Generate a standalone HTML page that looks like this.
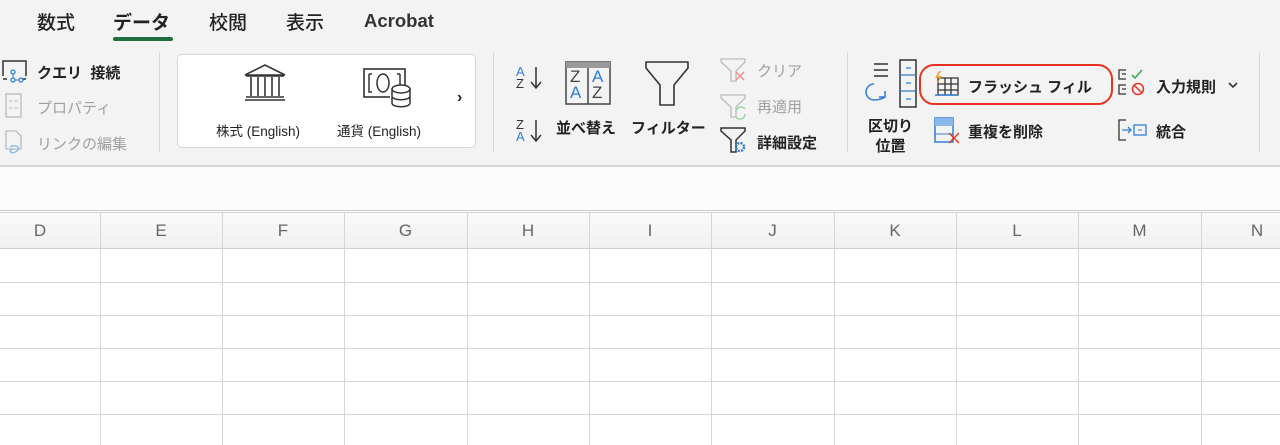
<!DOCTYPE html>
<html><head><meta charset="utf-8"><style>
*{margin:0;padding:0;box-sizing:border-box}
body{width:1280px;height:445px;overflow:hidden;background:#fff;font-family:"Liberation Sans","Noto Sans CJK JP",sans-serif;color:#222;position:relative}
.ab{position:absolute;white-space:nowrap}
.tab{font-size:19px;top:8px;font-weight:500}
.t{font-size:15px}
.g{color:#a0a0a0}
svg{position:absolute;overflow:visible}
.col{position:absolute;top:213px;height:36px;font-size:17px;color:#666;text-align:center;line-height:36px}
</style></head><body>
<div class="ab" style="left:0;top:0;width:1280px;height:166px;background:#f3f3f3"></div>
<div class="ab" style="left:0;top:165px;width:1280px;height:2px;background:#d6d6d6"></div>
<div class="ab tab" style="left:37px">数式</div>
<div class="ab tab" style="left:113px;font-weight:bold">データ</div>
<div class="ab" style="left:113px;top:37px;width:60px;height:4px;border-radius:2px;background:#1e6e3f"></div>
<div class="ab tab" style="left:209px">校閲</div>
<div class="ab tab" style="left:286px">表示</div>
<div class="ab tab" style="left:364px;top:10px;font-weight:bold;font-size:18.5px;color:#333">Acrobat</div>

<!-- group 1 -->
<svg style="left:2px;top:60px" width="26" height="22"><path d="M1 16V1h23v15" fill="none" stroke="#333" stroke-width="1.5"/><path d="M1 19h4M20 19h4" stroke="#333" stroke-width="1.5"/><circle cx="11" cy="12" r="2" fill="none" stroke="#2f7ed8" stroke-width="1.3"/><circle cx="11" cy="20" r="2" fill="none" stroke="#2f7ed8" stroke-width="1.3"/><circle cx="19" cy="20" r="2" fill="none" stroke="#2f7ed8" stroke-width="1.3"/><path d="M11 14v4M13 20h4" stroke="#2f7ed8"/></svg>
<div class="ab t" style="left:37px;top:62px;font-weight:bold">クエリ&nbsp; 接続</div>
<svg style="left:5px;top:93px" width="18" height="25"><rect x="1" y="1" width="15" height="23" fill="none" stroke="#bbb" stroke-width="1.3"/><path d="M4 8h3M9 8h4M4 15h3M9 15h4" stroke="#bbb"/></svg>
<div class="ab t g" style="left:37px;top:97px">プロパティ</div>
<svg style="left:5px;top:130px" width="20" height="26"><path d="M1 1h10l5 5v13H1z" fill="none" stroke="#bbb" stroke-width="1.3"/><path d="M5 17c4-3 12 0 7 4s-10 0-4-2" fill="none" stroke="#8ab4e0" stroke-width="1.3"/></svg>
<div class="ab t g" style="left:37px;top:133px">リンクの編集</div>
<div class="ab" style="left:159px;top:52px;width:1px;height:100px;background:#d8d8d8"></div>

<!-- data types box -->
<div class="ab" style="left:177px;top:54px;width:299px;height:94px;background:#fff;border:1px solid #d6d6d6;border-radius:5px"></div>
<svg style="left:243px;top:64px" width="44" height="38"><path d="M2 11L22 1l20 10z" fill="none" stroke="#333" stroke-width="1.6"/><path d="M3 12h38M2 36h40M3 33h38M8 13v19M15 13v19M22 13v19M29 13v19M36 13v19" stroke="#333" stroke-width="1.6"/></svg>
<div class="ab" style="left:216px;top:120px;font-size:13.5px">株式 (English)</div>
<svg style="left:363px;top:68px" width="50" height="42"><rect x="1" y="1" width="41" height="28" fill="none" stroke="#333" stroke-width="1.6"/><path d="M6 6h3M6 6v18h3M37 6h-3M37 6v18" stroke="#333" stroke-width="1.5" fill="none"/><ellipse cx="20" cy="15" rx="6" ry="9" fill="none" stroke="#333" stroke-width="1.5"/><rect x="27" y="17" width="21" height="24" rx="10" fill="#fff"/><ellipse cx="38" cy="21" rx="9" ry="4" fill="none" stroke="#333" stroke-width="1.5"/><path d="M29 21v14c0 5 18 5 18 0V21M29 28c0 5 18 5 18 0" fill="none" stroke="#333" stroke-width="1.5"/></svg>
<div class="ab" style="left:337px;top:120px;font-size:13.5px">通貨 (English)</div>
<div class="ab" style="left:457px;top:89px;font-size:16px;font-weight:bold">›</div>
<div class="ab" style="left:493px;top:52px;width:1px;height:100px;background:#d8d8d8"></div>

<!-- sort -->
<div class="ab" style="left:516px;top:66px;font-size:13px;line-height:12px;color:#2f7ed8">A<br><span style="color:#333">Z</span></div>
<svg style="left:529px;top:66px" width="14" height="24"><path d="M7 1v21M2 16l5 6 5-6" fill="none" stroke="#333" stroke-width="1.5"/></svg>
<div class="ab" style="left:516px;top:119px;font-size:13px;line-height:12px;color:#333">Z<br><span style="color:#2f7ed8">A</span></div>
<svg style="left:529px;top:119px" width="14" height="24"><path d="M7 1v21M2 16l5 6 5-6" fill="none" stroke="#333" stroke-width="1.5"/></svg>
<svg style="left:565px;top:61px" width="46" height="44"><rect x="1" y="1" width="44" height="42" fill="none" stroke="#444" stroke-width="1.5"/><rect x="1" y="1" width="44" height="6" fill="#999"/><path d="M23 7v36" stroke="#444" stroke-width="1.5"/></svg>
<div class="ab" style="left:570px;top:69px;font-size:17px;line-height:16px;color:#444">Z<br><span style="color:#2f7ed8">A</span></div>
<div class="ab" style="left:592px;top:69px;font-size:17px;line-height:16px;color:#2f7ed8">A<br><span style="color:#444">Z</span></div>
<div class="ab t" style="left:556px;top:117px;font-weight:bold">並べ替え</div>
<svg style="left:645px;top:61px" width="44" height="45"><path d="M1 1h42v6L29 24v20h-14V24L1 7z" fill="none" stroke="#333" stroke-width="1.6" stroke-linejoin="round"/></svg>
<div class="ab t" style="left:631px;top:117px;font-weight:bold">フィルター</div>
<svg style="left:720px;top:58px" width="28" height="24"><path d="M1 1h24v3l-9 9v10h-5V13L1 4z" fill="none" stroke="#bbb" stroke-width="1.3"/><path d="M16 14l8 8M24 14l-8 8" stroke="#f08a8a" stroke-width="1.3"/></svg>
<div class="ab t g" style="left:757px;top:60px">クリア</div>
<svg style="left:720px;top:94px" width="28" height="26"><path d="M1 1h24v3l-9 9v10h-5V13L1 4z" fill="none" stroke="#bbb" stroke-width="1.3"/><path d="M16 18a5 5 0 0 1 9-3M25 20a5 5 0 0 1-9 3" fill="none" stroke="#8fd4a0" stroke-width="1.3"/></svg>
<div class="ab t g" style="left:757px;top:96px">再適用</div>
<svg style="left:720px;top:127px" width="28" height="28"><path d="M1 1h24v3l-9 9v12h-5V13L1 4z" fill="none" stroke="#333" stroke-width="1.5"/><circle cx="20" cy="20" r="4" fill="none" stroke="#2f7ed8" stroke-width="2.5" stroke-dasharray="2 1.2"/></svg>
<div class="ab t" style="left:757px;top:132px;font-weight:bold">詳細設定</div>
<div class="ab" style="left:847px;top:52px;width:1px;height:100px;background:#d8d8d8"></div>

<!-- text to columns -->
<svg style="left:864px;top:59px" width="54" height="50"><path d="M10 5h14M10 11h14M10 17h14" stroke="#333" stroke-width="1.4"/><path d="M10 25a8 8 0 0 0 0 16c4 0 8-1 11-3M15 38h6v-6" fill="none" stroke="#2f7ed8" stroke-width="1.5"/><rect x="36" y="1" width="16" height="47" fill="none" stroke="#333" stroke-width="1.5"/><path d="M36 16h16M36 32h16M42 9h5M42 24h5M42 40h5" stroke="#2f7ed8" stroke-width="1.2"/></svg>
<div class="ab t" style="left:868px;top:117px;font-weight:bold;line-height:20px;text-align:center">区切り<br>位置</div>
<!-- flash fill -->
<div class="ab" style="left:919px;top:64px;width:194px;height:41px;border:2.5px solid #e8321f;border-radius:15px"></div>
<svg style="left:932px;top:70px" width="28" height="26"><path d="M6 8h20v17H6zM6 14h20M6 20h20M13 8v17M19 8v17" fill="none" stroke="#333" stroke-width="1.3"/><path d="M3 25h23" stroke="#2f7ed8" stroke-width="1.4"/><path d="M7 1l-4 7h4l-2 6 5-8H6l3-5z" fill="#f0a030"/></svg>
<div class="ab t" style="left:968px;top:76px;font-weight:bold">フラッシュ フィル</div>
<svg style="left:934px;top:117px" width="28" height="28"><rect x="1" y="1" width="18" height="24" fill="none" stroke="#2f7ed8" stroke-width="1.5"/><rect x="1" y="1" width="18" height="8" fill="#8ab8ea"/><path d="M1 17h18" stroke="#2f7ed8"/><path d="M15 16l10 10M25 16l-10 10" stroke="#e8321f" stroke-width="1.4"/></svg>
<div class="ab t" style="left:968px;top:121px;font-weight:bold">重複を削除</div>
<svg style="left:1118px;top:67px" width="30" height="30"><path d="M8 3H1v9h7M4 7h4M8 18H1v9h7M4 22h4" fill="none" stroke="#333" stroke-width="1.3"/><path d="M14 8l3 3 7-8" fill="none" stroke="#2eaa4a" stroke-width="1.5"/><circle cx="20" cy="22" r="5.5" fill="none" stroke="#e8321f" stroke-width="1.5"/><path d="M16 18l8 8" stroke="#e8321f" stroke-width="1.5"/></svg>
<div class="ab t" style="left:1156px;top:76px;font-weight:bold">入力規則</div>
<svg style="left:1228px;top:82px" width="10" height="7"><path d="M1 1l4 4 4-4" fill="none" stroke="#333" stroke-width="1.6"/></svg>
<svg style="left:1118px;top:119px" width="30" height="22"><path d="M8 1H1v20h7" fill="none" stroke="#333" stroke-width="1.3"/><path d="M4 11h9M10 8l3 3-3 3" fill="none" stroke="#2f7ed8" stroke-width="1.3"/><rect x="16" y="6" width="12" height="10" fill="none" stroke="#2f7ed8" stroke-width="1.3"/><path d="M20 11h4" stroke="#2f7ed8"/></svg>
<div class="ab t" style="left:1156px;top:121px;font-weight:bold">統合</div>
<div class="ab" style="left:1259px;top:52px;width:1px;height:100px;background:#d8d8d8"></div>

<!-- formula bar -->
<div class="ab" style="left:0;top:167px;width:1280px;height:43px;background:#fcfcfc"></div>
<div class="ab" style="left:0;top:210px;width:1280px;height:3px;border-top:1px solid #c8c8c8;border-bottom:1px solid #d0d0d0"></div>
<div class="ab" style="left:0;top:213px;width:1280px;height:36px;background:linear-gradient(#fafafa,#f0f0f0);border-bottom:1px solid #d0d0d0"></div>
<div class="col" style="left:0;width:100px;padding-right:20px">D</div>
<div class="col" style="left:100px;width:122px">E</div>
<div class="col" style="left:222px;width:122px">F</div>
<div class="col" style="left:344px;width:123px">G</div>
<div class="col" style="left:467px;width:122px">H</div>
<div class="col" style="left:589px;width:122px">I</div>
<div class="col" style="left:711px;width:123px">J</div>
<div class="col" style="left:834px;width:122px">K</div>
<div class="col" style="left:956px;width:122px">L</div>
<div class="col" style="left:1078px;width:123px">M</div>
<div class="col" style="left:1201px;width:122px;padding-right:10px">N</div>
<svg style="left:0;top:213px" width="1280" height="232">
<g stroke="#d6d6d6" stroke-width="1">
<path d="M100.5 0V232M222.5 0V232M344.5 0V232M467.5 0V232M589.5 0V232M711.5 0V232M834.5 0V232M956.5 0V232M1078.5 0V232M1201.5 0V232"/>
<path d="M0 69.5H1280M0 102.5H1280M0 135.5H1280M0 168.5H1280M0 201.5H1280"/>
</g></svg>
</body></html>
